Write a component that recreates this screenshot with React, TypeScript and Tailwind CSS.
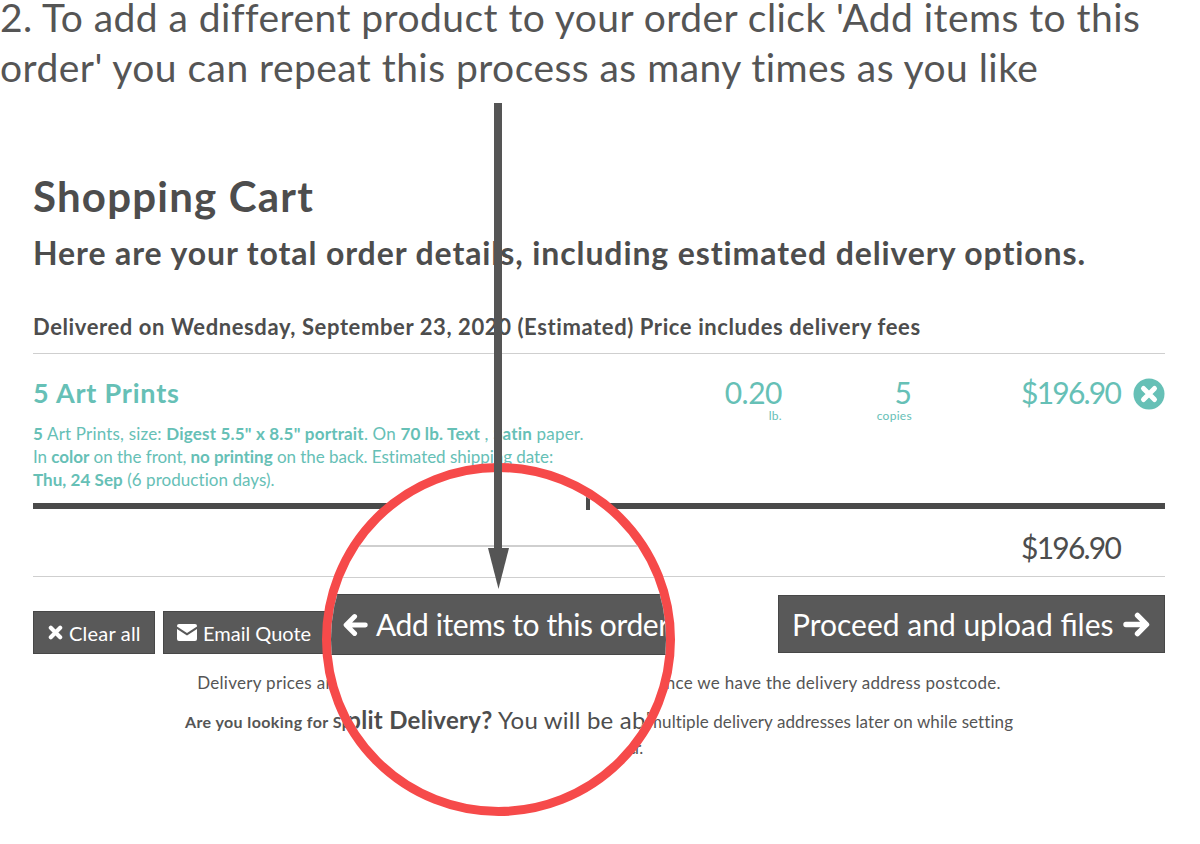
function ArrowIcon({ left, className }: { left?: boolean; className: string }) {
  return (
    <svg className={className} viewBox="0 0 28 26" fill="none" stroke="currentColor" strokeWidth="5.5" strokeLinecap="round" strokeLinejoin="round">
      {left ? <path d="M25 13H4M13 3.5L3.5 13l9.5 9.5" /> : <path d="M3 13h21M15 3.5l9.5 9.5-9.5 9.5" />}
    </svg>
  );
}

function CrossIcon({ className }: { className: string }) {
  return (
    <svg className={className} viewBox="0 0 16 16" fill="none" stroke="currentColor" strokeWidth="4.4" strokeLinecap="round">
      <path d="M3 3l10 10M13 3L3 13" />
    </svg>
  );
}

export default function App() {
  return (
    <div className="relative w-[1200px] h-[844px] overflow-hidden bg-white text-[#4d4d4d] font-['Lato',sans-serif]">
      <h1 className="text-[39px] leading-[50px] tracking-[0.45px] text-[#555] font-normal whitespace-nowrap mt-[-8px]">
        2. To add a different product to your order click 'Add items to this
        <br />
        order' you can repeat this process as many times as you like
      </h1>

      <div className="mt-[79px] ml-[33px] w-[1132px]">
        <h2 className="text-[42px] leading-[50px] font-bold tracking-[1.2px] text-[#4d4d4d]">Shopping Cart</h2>
        <p className="text-[32px] leading-[40px] font-bold tracking-[0.9px] mt-[12px] whitespace-nowrap">
          Here are your total order details, including estimated delivery options.
        </p>
        <p className="text-[22px] leading-[30px] font-bold tracking-[0.6px] mt-[39px] pb-[11px] border-b border-[#cfcfcf] whitespace-nowrap">
          Delivered on Wednesday, September 23, 2020 (Estimated) Price includes delivery fees
        </p>

        <div className="flex items-start text-[#66c0b6] h-[155px] border-b-[6px] border-[#4a4a4a]">
          <div className="w-[620px]">
            <div className="text-[27px] leading-[34px] font-bold tracking-[0.8px] mt-[22px]">5 Art Prints</div>
            <div className="text-[17px] leading-[23px] mt-[12px] whitespace-nowrap">
              <div className="tracking-[0.18px]">
                <b>5</b> Art Prints, size: <b>Digest 5.5" x 8.5" portrait</b>. On <b>70 lb. Text</b> , <b>Satin</b> paper.
              </div>
              <div className="tracking-[-0.04px]">
                In <b>color</b> on the front, <b>no printing</b> on the back. Estimated shipping date:
              </div>
              <div className="tracking-[0.05px]">
                <b>Thu, 24 Sep</b> (6 production days).
              </div>
            </div>
          </div>
          <div className="w-[129px] text-right mt-[20px]">
            <div className="text-[30px] leading-[36px] tracking-[-0.5px]">0.20</div>
            <div className="text-[12px] leading-[12px] tracking-[0.3px]">lb.</div>
          </div>
          <div className="w-[130px] text-right mt-[20px]">
            <div className="text-[30px] leading-[36px]">5</div>
            <div className="text-[12px] leading-[12px] tracking-[0.3px]">copies</div>
          </div>
          <div className="w-[208px] text-right mt-[20px] text-[30px] leading-[36px] tracking-[-1.8px]">$196.90</div>
          <svg className="ml-[13px] mt-[24px] w-[32px] h-[32px]" viewBox="0 0 32 32">
            <circle cx="16" cy="16" r="15.5" fill="#66c0b6" />
            <path d="M10.5 10.5l11 11M21.5 10.5l-11 11" stroke="#fff" strokeWidth="5" strokeLinecap="round" />
          </svg>
        </div>

        <div className="h-[68px] border-b border-[#cfcfcf] flex items-center justify-end pr-[45px] text-[30px] tracking-[-1.8px] pt-[9px]">
          $196.90
        </div>

        <div className="flex items-end mt-[18px]">
          <button className="flex items-center gap-[6px] w-[122px] h-[43px] pl-[14px] bg-[#595959] border border-[#474747] text-white text-[20px] tracking-[0.2px] whitespace-nowrap">
            <CrossIcon className="w-[15px] h-[15px] shrink-0" /> Clear all
          </button>
          <button className="flex items-center gap-[6px] w-[180px] h-[43px] ml-[8px] pl-[13px] bg-[#595959] border border-[#474747] text-white text-[20px] whitespace-nowrap">
            <svg className="w-[20px] h-[17px] shrink-0" viewBox="0 0 20 17" fill="currentColor">
              <path d="M2 0h16a2 2 0 0 1 2 2v.6L10 9 0 2.6V2a2 2 0 0 1 2-2z" />
              <path d="M0 5v10a2 2 0 0 0 2 2h16a2 2 0 0 0 2-2V5l-10 6.4z" />
            </svg>
            Email Quote
          </button>
          <button className="flex items-center justify-between ml-auto w-[387px] h-[58px] pl-[13px] pr-[14px] mb-[1px] bg-[#595959] border border-[#474747] text-white text-[30px] whitespace-nowrap">
            Proceed and upload files <ArrowIcon className="w-[27px] h-[25px] shrink-0" />
          </button>
        </div>

        <div className="text-center text-[17px] leading-[24px] tracking-[0.3px] text-[#555] mt-[17px] whitespace-nowrap">
          Delivery prices are estimated and will be calculated exactly once we have the delivery address postcode.
        </div>
        <div className="text-center text-[17px] leading-[26px] tracking-[0.08px] text-[#555] mt-[14px] whitespace-nowrap">
          <b className="text-[16px] tracking-[0.4px]">Are you looking for Split Delivery?</b> You will be able to add the multiple delivery addresses later on while setting
          <br />
          <span className="tracking-[-1.3px]">up your order.</span>
        </div>
      </div>

      {/* Magnifier lens */}
      <div className="absolute left-[322px] top-[463px] w-[353px] h-[353px] rounded-full border-[9px] border-[#f64a4a] bg-white overflow-hidden">
        <div className="w-[4px] h-[17px] bg-[#4a4a4a] ml-[255px] mt-[21px]" />
        <div className="h-[2px] bg-[#cfcfcf] mt-[35px]" />
        <div className="h-[1px] bg-[#cfcfcf] mt-[30px]" />
        <div className="flex items-center gap-[8px] h-[61px] mt-[16px] pl-[12px] bg-[#595959] border-y border-[#474747] text-white text-[30px] tracking-[-0.4px] whitespace-nowrap">
          <ArrowIcon left className="w-[25px] h-[24px] shrink-0" /> Add items to this order
        </div>
        <div className="mt-[49px] ml-[3px] text-[24px] leading-[32px] tracking-[0.2px] whitespace-nowrap">
          <b className="tracking-[0.3px]">Split Delivery?</b> You will be able
        </div>
      </div>

      {/* Pointer arrow */}
      <svg className="absolute left-[484px] top-[103px]" width="30" height="486" viewBox="0 0 30 486">
        <rect x="10" y="0" width="8" height="446" fill="#555" />
        <polygon points="4,445 25,445 14.5,486" fill="#555" />
      </svg>
    </div>
  );
}
